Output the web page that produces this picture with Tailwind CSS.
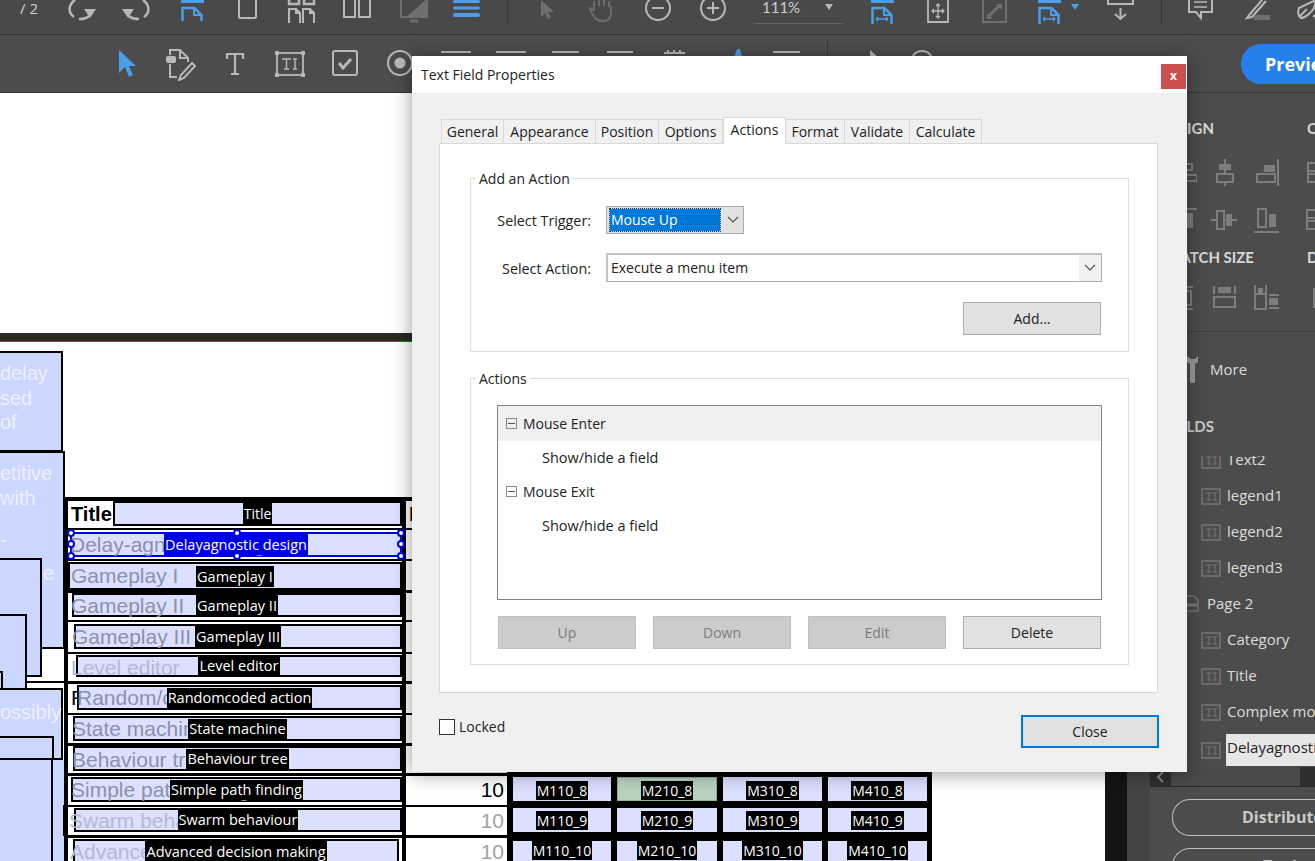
<!DOCTYPE html>
<html lang="en">
<head>
  <meta charset="UTF-8">
  <title>Text Field Properties</title>
  <script src="https://cdn.jsdelivr.net/npm/@tailwindcss/browser@4"></script>
</head>
<body class="bg-white">
<div class="relative w-[1315px] h-[861px] overflow-hidden font-['Open_Sans',sans-serif] text-[14px]">

  <!-- top toolbar -->
  <div class="flex items-start h-[35px] bg-[#494949] border-b border-[#333333] overflow-hidden text-[#b8b8b8] *:shrink-0">
    <span class="ml-[20px] mt-[-3px] w-[23px] text-[15px] text-[#d0d0d0]">/ 2</span>
    <svg class="ml-[25px]" width="28" height="24" fill="none" stroke="#b8b8b8" stroke-width="2.5"><path d="M7 0C0 5 0 13 6 17"/><path d="M11 19c4 0 8-1 10-3"/><path d="M16 9h12l-6 9z" fill="#b8b8b8" stroke="none"/></svg>
    <svg class="ml-[26px]" width="28" height="24" fill="none" stroke="#b8b8b8" stroke-width="2.5"><path d="M21 0C28 5 28 13 22 17"/><path d="M17 19c-4 0-8-1-10-3"/><path d="M12 9H0l6 9z" fill="#b8b8b8" stroke="none"/></svg>
    <svg class="ml-[31px]" width="23" height="24" fill="none" stroke="#4a9eea" stroke-width="2.5"><path d="M0 1h23" stroke-width="4"/><path d="M1.500 21V8h12l7 7v6"/><path d="M13 8v7h8" stroke-width="2"/></svg>
    <svg class="ml-[33px]" width="21" height="24" fill="none" stroke="#b8b8b8" stroke-width="2"><path d="M2 0v17a1 1 0 0 0 1 1h15a1 1 0 0 0 1-1V0"/></svg>
    <svg class="ml-[29px]" width="29" height="24" fill="none" stroke="#b8b8b8" stroke-width="2"><path d="M2 0v4h10V0M17 0v4h10V0" stroke-width="2.500"/><path d="M2 23V9h7l4 4v10M16 23V9h7l4 4v10M9 9v4h4M23 9v4h4"/></svg>
    <svg class="ml-[26px]" width="30" height="24" fill="none" stroke="#b8b8b8" stroke-width="2"><path d="M2 0v17h11V0M17 0v17h11V0"/></svg>
    <svg class="ml-[26px]" width="32" height="24" fill="none" stroke="#6f6f6f" stroke-width="2"><path d="M3 0v17h26V0"/><path d="M29 0v17H10z" fill="#6f6f6f"/><path d="M12 21h8" stroke-width="3"/></svg>
    <svg class="ml-[23px]" width="27" height="24" fill="#4a9eea"><rect y="0" width="27" height="3" rx="1.500"/><rect y="6.500" width="27" height="3" rx="1.500"/><rect y="13" width="27" height="4" rx="2"/></svg>
    <div class="ml-[27px] w-px h-[24px] bg-[#383838]"></div>
    <svg class="ml-[32px]" width="18" height="24" fill="#6f6f6f"><path d="M1 0v17l4-4 3 6 3-1-3-6h6z"/></svg>
    <svg class="ml-[30px]" width="27" height="24" fill="none" stroke="#6f6f6f" stroke-width="1.800"><path d="M6 11V1M11 6V0M16 6V0M21 7V1M6 11L2 8c-1 2 3 7 5 10 2 2 5 3 8 3 6 0 8-4 8-8V6"/></svg>
    <svg class="ml-[30px]" width="26" height="24" fill="none" stroke="#b8b8b8" stroke-width="2"><circle cx="13" cy="8" r="12"/><path d="M7 8h12"/></svg>
    <svg class="ml-[29px]" width="26" height="24" fill="none" stroke="#b8b8b8" stroke-width="2"><circle cx="13" cy="8" r="12"/><path d="M7 8h12M13 2v12"/></svg>
    <div class="ml-[29px] w-[88px] h-[24px] border-b border-[#666666] flex items-start text-[#cfcfcf]">
      <span class="ml-[7px] mt-[-4px] font-['Lato',sans-serif] text-[15px]">111%</span>
      <span class="ml-[25px] mt-[4px] w-0 h-0 border-x-[4px] border-x-transparent border-t-[6px] border-t-[#b8b8b8]"></span>
    </div>
    <svg class="ml-[28px]" width="23" height="24" fill="none" stroke="#4a9eea" stroke-width="2.500"><path d="M0 1h23" stroke-width="4"/><path d="M1.500 24V8h12l7 7v9"/><path d="M13 8v7h8" stroke-width="2"/><path d="M5 19h12M5 19l2-2M5 19l2 2M17 19l-2-2M17 19l-2 2" stroke-width="1.300"/></svg>
    <svg class="ml-[33px]" width="22" height="24" fill="none" stroke="#b8b8b8" stroke-width="1.800"><path d="M1 0v22h20V0"/><path d="M11 4v14M5 11h12M9 6l2-2 2 2M9 16l2 2 2-2M7 9l-2 2 2 2M15 9l2 2-2 2" stroke-width="1.300"/></svg>
    <svg class="ml-[33px]" width="25" height="24" fill="none" stroke="#6f6f6f" stroke-width="2"><path d="M1 0v22h23V0"/><path d="M7 16l10-10" stroke-width="3"/><path d="M14 4h6v6zM5 13v6h6z" fill="#6f6f6f" stroke="none"/></svg>
    <svg class="ml-[31px]" width="23" height="24" fill="none" stroke="#4a9eea" stroke-width="2.500"><path d="M0 1h23" stroke-width="4"/><path d="M1.500 24V8h12l7 7v9"/><path d="M13 8v7h8" stroke-width="2"/><path d="M5 19h12M5 19l2-2M5 19l2 2M17 19l-2-2M17 19l-2 2" stroke-width="1.300"/></svg>
    <span class="ml-[10px] mt-[4px] w-0 h-0 border-x-[4px] border-x-transparent border-t-[6px] border-t-[#4a9eea]"></span>
    <svg class="ml-[28px]" width="27" height="24" fill="none" stroke="#b8b8b8" stroke-width="2"><path d="M1 0v4h25V0"/><path d="M13.500 8v11M8 14l5.500 5 5.500-5"/></svg>
    <div class="ml-[27px] w-px h-[24px] bg-[#383838]"></div>
    <svg class="ml-[26px]" width="25" height="24" fill="none" stroke="#b8b8b8" stroke-width="2"><path d="M1 0v12h7l5 6v-6h11V0"/><path d="M6 2h13M6 7h13" stroke-width="1.500"/></svg>
    <svg class="ml-[28px]" width="29" height="24" fill="none" stroke="#b8b8b8" stroke-width="2"><path d="M21 0L9 14l-3 4 5-1L25 1"/><rect x="13" y="15" width="16" height="5" fill="#6f6f6f" stroke="none"/></svg>
    <svg class="ml-[26px]" width="30" height="24" fill="none" stroke="#b8b8b8" stroke-width="2"><path d="M20 0L3 8c-2 5 0 9 2 10 4 0 10-5 13-10zM3 17l8-8M17 17c2-2 4-2 5 0 2-1 4-1 6 0"/></svg>
  </div>

  <!-- second toolbar -->
  <div class="flex items-start h-[58px] bg-[#4c4c4c] border-b border-[#333333] overflow-hidden *:shrink-0">
    <svg class="ml-[118px] mt-[15px]" width="18" height="27" fill="#4a9eea"><path d="M1 0v23l6-6 4 10 4-2-4-9h7z"/></svg>
    <svg class="ml-[29px] mt-[14px]" width="31" height="32" fill="none" stroke="#b8b8b8" stroke-width="2"><rect x="1" y="7" width="10" height="7" rx="2" fill="#b8b8b8" stroke="none"/><path d="M5 6V1h10l8 8v4M15 1v8h8M5 15v13h7"/><path d="M27 14l3 3-11 12-5 2 2-5z"/></svg>
    <svg class="ml-[29px] mt-[17px]" width="20" height="24" fill="none" stroke="#b8b8b8" stroke-width="2.200"><path d="M2 7V2h16v5M10 2v20M6 22h8"/></svg>
    <svg class="ml-[30px] mt-[16px]" width="30" height="26" fill="none" stroke="#b8b8b8" stroke-width="1.800"><rect x="2" y="2" width="26" height="22"/><path d="M7 8h9M11.500 8v10M9 18h5M20 8v10M18 8h4M18 18h4" stroke-width="1.400"/><circle cx="2" cy="2" r="1.500" fill="#b8b8b8"/><circle cx="28" cy="2" r="1.500" fill="#b8b8b8"/><circle cx="2" cy="24" r="1.500" fill="#b8b8b8"/><circle cx="28" cy="24" r="1.500" fill="#b8b8b8"/></svg>
    <svg class="ml-[27px] mt-[15px]" width="26" height="26" fill="none" stroke="#b8b8b8" stroke-width="2"><rect x="1" y="1" width="24" height="24" rx="2"/><path d="M7 13l4 5 8-9" stroke-width="3"/></svg>
    <svg class="ml-[29px] mt-[15px]" width="26" height="26" fill="none" stroke="#b8b8b8" stroke-width="2"><circle cx="13" cy="13" r="12"/><circle cx="13" cy="13" r="5.500" fill="#b8b8b8" stroke="none"/></svg>
    <!-- tools that just show over the dialog -->
    <div class="ml-[28px] mt-[16px] w-[30px] h-[8px] border-t-2 border-[#b8b8b8]"></div>
    <div class="ml-[25px] mt-[16px] w-[30px] h-[8px] border-t-2 border-[#b8b8b8]"></div>
    <div class="ml-[26px] mt-[16px] w-[27px] h-[8px] border-t-2 border-[#b8b8b8]"></div>
    <div class="ml-[28px] mt-[16px] w-[26px] h-[8px] border-t-2 border-[#b8b8b8]"></div>
    <svg class="ml-[30px] mt-[15px]" width="23" height="8" fill="none" stroke="#b8b8b8" stroke-width="2"><path d="M1 3h21"/><path d="M5 0v4M11 0v4M17 0v4"/></svg>
    <svg class="ml-[48px] mt-[14px]" width="8" height="8" fill="#4a9eea"><path d="M3 0h3l2 8H0z"/></svg>
    <div class="ml-[31px] mt-[16px] w-[27px] h-[8px] border-t-2 border-[#b8b8b8]"></div>
    <div class="ml-[27px] mt-[5px] w-px h-[18px] bg-[#383838]"></div>
    <svg class="ml-[41px] mt-[15px]" width="10" height="8" fill="#b8b8b8"><path d="M1 0l9 8H1z"/></svg>
    <svg class="ml-[32px] mt-[15px]" width="22" height="8" fill="none" stroke="#b8b8b8" stroke-width="2"><path d="M1 8C3 2 7 1 11 1s8 1 10 7"/></svg>
    <div class="ml-[308px] mt-[9px] flex items-center w-[100px] h-[40px] rounded-l-[20px] bg-[#2680eb] pl-[24px] text-white font-bold text-[18px]">Preview</div>
  </div>

  <!-- main area -->
  <div class="flex h-[768px]">
    <div class="flex flex-col w-[1105px] shrink-0 bg-white">
      <div class="h-[240px] shrink-0"></div>
      <div class="h-[9px] shrink-0 bg-[#2a2a2a] border-b border-[#0d8a0d]"></div>

      <!-- form page -->
      <div class="relative flex-1 overflow-hidden font-['Liberation_Sans',Arial,sans-serif] text-[20px] text-[#eef1ff]">
        <div class="absolute left-0 top-[9px] w-[63px] h-[101px] bg-[#ccd7ff] border-2 border-l-0 border-black pt-[8px] leading-[24.500px]">
          <div>delay</div><div>sed</div><div>of</div>
        </div>
        <div class="absolute left-0 top-[109px] w-[65px] h-[198px] bg-[#ccd7ff] border-2 border-l-0 border-black pt-[8px] leading-[24.500px]">
          <div>etitive</div><div>with</div>
          <div class="mt-[18px]">-</div>
          <div class="mt-[8px] pl-[43px]">e</div>
        </div>
        <div class="absolute left-0 top-[216px] w-[42px] h-[119px] bg-[#ccd7ff] border-2 border-l-0 border-black"></div>
        <div class="absolute left-0 top-[272px] w-[27px] h-[76px] bg-[#ccd7ff] border-2 border-l-0 border-black"></div>
        <div class="absolute left-0 top-[329px] w-[3px] h-[19px] bg-[#ccd7ff] border-2 border-l-0 border-black"></div>
        <div class="absolute left-[27px] top-[339px] w-[37px] h-[2px] bg-black"></div>
        <div class="absolute left-0 top-[346px] w-[63px] h-[72px] bg-[#ccd7ff] border-2 border-l-0 border-black pt-[7px]">ossibly</div>
        <div class="absolute left-0 top-[394px] w-[54px] h-[24px] bg-[#ccd7ff] border-2 border-l-0 border-black"></div>
        <div class="absolute left-[51px] top-[418px] w-[16px] h-[110px] bg-[#ccd7ff] border-l-2 border-black"></div>
        <div class="absolute left-0 top-[416px] w-[53px] h-[110px] bg-[#ccd7ff] border-2 border-l-0 border-black"></div>
        <div class="absolute left-[63px] top-[463px] w-[5px] h-[31px] border border-black"></div>

        <!-- the table of the form -->
        <div class="absolute left-[64px] top-[155px] w-[868px] h-[370px] bg-black pl-[4px] pt-[4px] text-[21px] text-[#8b90ad]">

          <div class="flex gap-[4px] h-[27px] mb-[2px]">
            <div class="flex w-[334px] bg-white">
              <span class="w-[45px] pl-[3px] shrink-0 overflow-hidden font-bold text-[20px] text-black leading-[26px]">Title</span>
              <div class="relative flex-1 h-[25px] border-2 border-black bg-[#dbe0ff] flex justify-center font-['Open_Sans',sans-serif] text-[14px] text-white"><span class="bg-black px-[1px] h-[21px] leading-[21px]">Title</span></div>
            </div>
            <div class="w-[101px] bg-white overflow-hidden pl-[3px] text-black font-bold leading-[26px]">I</div>
          </div>

          <div class="flex gap-[4px] h-[29px] mb-[2px]">
            <div class="w-[334px] bg-white pt-[2px] pl-[2px]">
              <div class="relative h-[25px] border-2 border-[#0000e6] bg-[#dbe0ff] flex justify-center overflow-visible">
                <span class="absolute -left-[2px] -top-[2px] leading-[26px] whitespace-nowrap">Delay-agnostic design</span>
                <span class="relative bg-[#0000e6] text-white px-[1px] h-[21px] leading-[21px] font-['Open_Sans',sans-serif] text-[14.500px]">Delayagnostic design</span>
                <span class="absolute -left-[5px] -top-[5px] w-[8px] h-[8px] rounded-full bg-white border-2 border-[#0000e6]"></span>
                <span class="absolute left-[161px] -top-[5px] w-[8px] h-[8px] rounded-full bg-white border-2 border-[#0000e6]"></span>
                <span class="absolute -right-[5px] -top-[5px] w-[8px] h-[8px] rounded-full bg-white border-2 border-[#0000e6]"></span>
                <span class="absolute -left-[5px] top-[6px] w-[8px] h-[8px] rounded-full bg-white border-2 border-[#0000e6]"></span>
                <span class="absolute -right-[5px] top-[6px] w-[8px] h-[8px] rounded-full bg-white border-2 border-[#0000e6]"></span>
                <span class="absolute -left-[5px] -bottom-[5px] w-[8px] h-[8px] rounded-full bg-white border-2 border-[#0000e6]"></span>
                <span class="absolute left-[161px] -bottom-[5px] w-[8px] h-[8px] rounded-full bg-white border-2 border-[#0000e6]"></span>
                <span class="absolute -right-[5px] -bottom-[5px] w-[8px] h-[8px] rounded-full bg-white border-2 border-[#0000e6]"></span>
              </div>
            </div>
            <div class="w-[101px] bg-white"></div>
          </div>

          <div class="flex gap-[4px] h-[29px] mb-[3px]">
            <div class="w-[334px] bg-white pt-[1px]">
              <div class="relative h-[28px] border-2 border-black bg-[#dbe0ff] flex justify-center items-center">
                <span class="absolute left-[1px] -top-[1px] leading-[26px] whitespace-nowrap">Gameplay I</span>
                <span class="relative bg-black text-white px-[1px] h-[21px] leading-[21px] font-['Open_Sans',sans-serif] text-[14.500px]">Gameplay I</span>
              </div>
            </div>
            <div class="w-[101px] bg-white"></div>
          </div>

          <div class="flex gap-[4px] h-[27px] mb-[2px]">
            <div class="w-[334px] bg-white pl-[4px]">
              <div class="relative h-[24px] border-2 border-black bg-[#dbe0ff] flex justify-center items-center">
                <span class="absolute -left-[3px] -top-[2px] leading-[26px] whitespace-nowrap">Gameplay II</span>
                <span class="relative bg-black text-white px-[1px] h-[21px] leading-[21px] font-['Open_Sans',sans-serif] text-[14.500px]">Gameplay II</span>
              </div>
            </div>
            <div class="w-[101px] bg-white"></div>
          </div>

          <div class="flex gap-[4px] h-[30px] mb-[2px]">
            <div class="w-[334px] bg-white pt-[2px] pl-[6px]">
              <div class="relative h-[25px] border-2 border-black bg-[#dbe0ff] flex justify-center items-center">
                <span class="absolute -left-[4px] -top-[2px] leading-[26px] whitespace-nowrap">Gameplay III</span>
                <span class="relative bg-black text-white px-[1px] h-[21px] leading-[21px] font-['Open_Sans',sans-serif] text-[14.500px]">Gameplay III</span>
              </div>
            </div>
            <div class="w-[101px] bg-white"></div>
          </div>

          <div class="flex gap-[4px] h-[27px] mb-[3px]">
            <div class="w-[334px] bg-white pt-[1px] pl-[8px]">
              <div class="relative h-[22px] border-2 border-black bg-[#dbe0ff] flex justify-center items-center">
                <span class="absolute -left-[7px] -top-[2px] leading-[26px] whitespace-nowrap text-[#b4b9d2]">Level editor</span>
                <span class="relative bottom-[1px] bg-black text-white px-[1px] h-[19px] leading-[19px] font-['Open_Sans',sans-serif] text-[14.500px]">Level editor</span>
              </div>
            </div>
            <div class="w-[101px] bg-white"></div>
          </div>

          <div class="flex gap-[4px] h-[29px] mb-[2px]">
            <div class="relative w-[334px] bg-white pt-[1px] pl-[9px]">
              <span class="absolute left-[3px] top-[1px] leading-[26px] text-black">R</span>
              <div class="relative h-[25px] border-2 border-black bg-[#dbe0ff] flex justify-center items-center">
                <span class="absolute -left-[2px] -top-[2px] leading-[26px] whitespace-nowrap">Random/coded action</span>
                <span class="relative bg-black text-white px-[1px] h-[20px] leading-[20px] font-['Open_Sans',sans-serif] text-[14.500px]">Randomcoded action</span>
              </div>
            </div>
            <div class="w-[101px] bg-white"></div>
          </div>

          <div class="flex gap-[4px] h-[28px] mb-[3px]">
            <div class="w-[334px] bg-white pt-[1px] pl-[5px]">
              <div class="relative h-[25px] border-2 border-black bg-[#dbe0ff] flex justify-center items-center">
                <span class="absolute -left-[3px] -top-[2px] leading-[26px] whitespace-nowrap">State machine</span>
                <span class="relative bg-black text-white px-[1px] h-[20px] leading-[20px] font-['Open_Sans',sans-serif] text-[14.500px]">State machine</span>
              </div>
            </div>
            <div class="w-[101px] bg-white"></div>
          </div>

          <div class="flex gap-[4px] h-[27px] mb-[3px]">
            <div class="w-[334px] bg-white pl-[5px]">
              <div class="relative h-[25px] border-2 border-black bg-[#dbe0ff] flex justify-center items-center">
                <span class="absolute -left-[3px] -top-[1px] leading-[26px] whitespace-nowrap">Behaviour tree</span>
                <span class="relative bg-black text-white px-[1px] h-[20px] leading-[20px] font-['Open_Sans',sans-serif] text-[14.500px]">Behaviour tree</span>
              </div>
            </div>
            <div class="w-[101px] bg-white"></div>
          </div>

          <div class="flex gap-[4px] h-[29px] mb-[2px]">
            <div class="w-[334px] bg-white pt-[1px] pl-[3px]">
              <div class="relative h-[25px] border-2 border-black bg-[#dbe0ff] flex justify-center items-center">
                <span class="absolute -left-[2px] -top-[2px] leading-[26px] whitespace-nowrap">Simple path finding</span>
                <span class="relative bg-black text-white px-[1px] h-[20px] leading-[20px] font-['Open_Sans',sans-serif] text-[14.500px]">Simple path finding</span>
              </div>
            </div>
            <div class="w-[101px] bg-white text-right pr-[3px] text-black leading-[28px]">10</div>
            <div class="flex gap-[6px] ml-[2px] pt-[1px] font-['Open_Sans',sans-serif] text-[14px] text-white">
              <div class="relative w-[98px] h-[24px] bg-[#dbe0ff] flex justify-center items-end pb-[1px]"><span class="bg-black px-[1px] h-[19px] leading-[19px]">M110_8</span></div>
              <div class="relative w-[100px] h-[24px] bg-[#b9d3bf] border border-[#8fb38f] flex justify-center items-end"><span class="bg-black px-[1px] h-[19px] leading-[19px]">M210_8</span></div>
              <div class="relative w-[99px] h-[24px] bg-[#dbe0ff] flex justify-center items-end pb-[1px]"><span class="bg-black px-[1px] h-[19px] leading-[19px]">M310_8</span></div>
              <div class="relative w-[99px] h-[24px] bg-[#dbe0ff] flex justify-center items-end pb-[1px]"><span class="bg-black px-[1px] h-[19px] leading-[19px]">M410_8</span></div>
            </div>
          </div>

          <div class="flex gap-[4px] h-[28px] mb-[3px]">
            <div class="w-[334px] bg-white pt-[1px] pl-[6px]">
              <div class="relative h-[24px] border-2 border-black bg-[#dbe0ff] flex justify-center items-center">
                <span class="absolute -left-[7px] -top-[2px] leading-[26px] whitespace-nowrap text-[#b4b9d2]">Swarm behaviour</span>
                <span class="relative bg-black text-white px-[1px] h-[20px] leading-[20px] font-['Open_Sans',sans-serif] text-[14.500px]">Swarm behaviour</span>
              </div>
            </div>
            <div class="w-[101px] bg-white text-right pr-[3px] text-[#a3a3a3] leading-[28px]">10</div>
            <div class="flex gap-[6px] ml-[2px] pt-[1px] font-['Open_Sans',sans-serif] text-[14px] text-white">
              <div class="w-[98px] h-[24px] bg-[#dbe0ff] flex justify-center items-center"><span class="bg-black px-[1px] h-[19px] leading-[19px]">M110_9</span></div>
              <div class="w-[100px] h-[24px] bg-[#dbe0ff] flex justify-center items-center"><span class="bg-black px-[1px] h-[19px] leading-[19px]">M210_9</span></div>
              <div class="w-[99px] h-[24px] bg-[#dbe0ff] flex justify-center items-center"><span class="bg-black px-[1px] h-[19px] leading-[19px]">M310_9</span></div>
              <div class="w-[99px] h-[24px] bg-[#dbe0ff] flex justify-center items-center"><span class="bg-black px-[1px] h-[19px] leading-[19px]">M410_9</span></div>
            </div>
          </div>

          <div class="flex gap-[4px] h-[30px]">
            <div class="w-[334px] bg-white pt-[1px] pl-[5px] pr-[3px]">
              <div class="relative h-[30px] border-2 border-black bg-[#dbe0ff] flex justify-center">
                <span class="absolute -left-[5px] -top-[2px] leading-[26px] whitespace-nowrap text-[#b4b9d2]">Advanced decision making</span>
                <span class="relative bg-black text-white px-[1px] h-[21px] leading-[21px] font-['Open_Sans',sans-serif] text-[14.500px]">Advanced decision making</span>
              </div>
            </div>
            <div class="w-[101px] bg-white text-right pr-[3px] text-[#a3a3a3] leading-[28px]">10</div>
            <div class="flex gap-[6px] ml-[2px] pt-[3px] font-['Open_Sans',sans-serif] text-[14px] text-white">
              <div class="w-[98px] h-[24px] bg-[#dbe0ff] flex justify-center"><span class="bg-black px-[1px] h-[19px] leading-[19px]">M110_10</span></div>
              <div class="w-[100px] h-[24px] bg-[#dbe0ff] flex justify-center"><span class="bg-black px-[1px] h-[19px] leading-[19px]">M210_10</span></div>
              <div class="w-[99px] h-[24px] bg-[#dbe0ff] flex justify-center"><span class="bg-black px-[1px] h-[19px] leading-[19px]">M310_10</span></div>
              <div class="w-[99px] h-[24px] bg-[#dbe0ff] flex justify-center"><span class="bg-black px-[1px] h-[19px] leading-[19px]">M410_10</span></div>
            </div>
          </div>
        </div>
      </div>
    </div>

    <div class="w-[22px] shrink-0 bg-[#141414]"></div>
    <div class="w-[23px] shrink-0 bg-[#454545]"></div>

    <!-- right panel -->
    <div class="w-[165px] shrink-0 overflow-hidden bg-[#4c4c4c] text-[#d8d8d8]">
      <div class="w-[320px] h-[239px] border-b border-[#3c3c3c]">
        <div class="flex pt-[25px] font-['Lato',sans-serif] text-[15px] font-bold text-[#d8d8d8] leading-[20px]"><span class="w-[64px] text-right">ALIGN</span><span class="ml-[93px]">CENTER</span></div>
        <div class="flex items-start mt-[21px] ml-[37px] h-[27px] *:shrink-0">
          <svg width="10" height="27" fill="none" stroke="#7d7d7d" stroke-width="2"><path d="M0 5h5v6H0M0 16h10v6H0" /></svg>
          <svg class="ml-[19px]" width="18" height="27" fill="none" stroke="#7d7d7d" stroke-width="2"><path d="M9 0v27"/><rect x="3" y="5" width="12" height="6" fill="#7d7d7d" stroke="none"/><rect x="1" y="15" width="16" height="8" fill="#4c4c4c"/></svg>
          <svg class="ml-[22px]" width="23" height="27" fill="none" stroke="#7d7d7d" stroke-width="2"><path d="M22 0v27"/><rect x="8" y="6" width="11" height="7" fill="#7d7d7d" stroke="none"/><rect x="1" y="15" width="18" height="8"/></svg>
          <svg class="ml-[28px]" width="14" height="27" fill="none" stroke="#7d7d7d" stroke-width="2"><path d="M1 3v21M1 4h13v8H1M1 15h13v8H1"/></svg>
        </div>
        <div class="flex items-start mt-[20px] ml-[37px] h-[27px] *:shrink-0">
          <svg width="10" height="27" fill="none" stroke="#7d7d7d" stroke-width="2"><path d="M0 3h10"/><rect x="0" y="7" width="6" height="15" fill="#7d7d7d" stroke="none"/></svg>
          <svg class="ml-[14px]" width="26" height="27" fill="none" stroke="#7d7d7d" stroke-width="2"><path d="M0 14h26"/><rect x="6" y="5" width="7" height="18" fill="#4c4c4c"/><rect x="15" y="8" width="6" height="12" fill="#7d7d7d" stroke="none"/></svg>
          <svg class="ml-[17px]" width="25" height="27" fill="none" stroke="#7d7d7d" stroke-width="2"><path d="M0 26h25"/><rect x="4" y="3" width="8" height="18"/><rect x="15" y="8" width="7" height="13" fill="#7d7d7d" stroke="none"/></svg>
          <svg class="ml-[27px]" width="14" height="27" fill="none" stroke="#7d7d7d" stroke-width="2"><path d="M1 3v21M1 4h13v8H1M1 15h13v8H1"/></svg>
        </div>
        <div class="flex pt-[14px] font-['Lato',sans-serif] text-[15px] font-bold leading-[20px]"><span class="w-[104px] text-right whitespace-nowrap">MATCH SIZE</span><span class="ml-[53px]">DISTRIBUTE</span></div>
        <div class="flex items-start mt-[18px] ml-[35px] h-[26px] *:shrink-0">
          <svg width="8" height="26" fill="none" stroke="#7d7d7d" stroke-width="2"><path d="M0 2h8M0 24h8M0 6h6v14H0"/></svg>
          <svg class="ml-[20px]" width="23" height="26" fill="none" stroke="#7d7d7d" stroke-width="2"><path d="M1 1v8M22 1v8"/><rect x="5" y="2" width="13" height="6" fill="#7d7d7d" stroke="none"/><rect x="1" y="12" width="21" height="10"/></svg>
          <svg class="ml-[18px]" width="25" height="26" fill="none" stroke="#7d7d7d" stroke-width="2"><rect x="1" y="9" width="11" height="15"/><path d="M1 0v8M12 0v8"/><rect x="4" y="3" width="5" height="5" fill="#7d7d7d" stroke="none"/><path d="M15 10h10M15 23h10"/><rect x="15" y="13" width="9" height="7" fill="#7d7d7d" stroke="none"/></svg>
          <svg class="ml-[33px]" width="10" height="26" fill="none" stroke="#7d7d7d" stroke-width="2"><path d="M10 4H2v18h8"/></svg>
        </div>
      </div>
      <div class="flex items-center h-[37px] mt-[19px] w-[200px]">
        <svg class="ml-[36px]" width="12" height="27" fill="#9a9a9a"><path d="M1 0v6l3 2v17a2 2 0 0 0 5 0V8l3-2V0L9 3H5z" /></svg>
        <span class="ml-[12px] text-[15px] text-[#dcdcdc]">More</span>
      </div>
      <div class="w-[64px] h-[20px] mt-[28px] text-right font-['Lato',sans-serif] text-[15px] font-bold leading-[20px] text-[#c8c8c8]">FIELDS</div>
      <div class="h-[311px] w-[300px] mt-[20px] overflow-hidden text-[15px] text-[#dcdcdc]">
        <div class="flex items-center h-[36px] -mt-[15px] pl-[51px]"><svg class="mt-[3px] shrink-0" width="20" height="19" fill="none" stroke="#767676" stroke-width="1.500"><rect x="1" y="2" width="18" height="15"/><path d="M5 6h6M8 6v7M6 13h4M14 6v7M12 6h4M12 13h4" stroke-width="1"/></svg><span class="ml-[6px]">Text2</span></div>
        <div class="flex items-center h-[36px] pl-[51px]"><svg class="mt-[3px] shrink-0" width="20" height="19" fill="none" stroke="#767676" stroke-width="1.500"><rect x="1" y="2" width="18" height="15"/><path d="M5 6h6M8 6v7M6 13h4M14 6v7M12 6h4M12 13h4" stroke-width="1"/></svg><span class="ml-[6px]">legend1</span></div>
        <div class="flex items-center h-[36px] pl-[51px]"><svg class="mt-[3px] shrink-0" width="20" height="19" fill="none" stroke="#767676" stroke-width="1.500"><rect x="1" y="2" width="18" height="15"/><path d="M5 6h6M8 6v7M6 13h4M14 6v7M12 6h4M12 13h4" stroke-width="1"/></svg><span class="ml-[6px]">legend2</span></div>
        <div class="flex items-center h-[36px] pl-[51px]"><svg class="mt-[3px] shrink-0" width="20" height="19" fill="none" stroke="#767676" stroke-width="1.500"><rect x="1" y="2" width="18" height="15"/><path d="M5 6h6M8 6v7M6 13h4M14 6v7M12 6h4M12 13h4" stroke-width="1"/></svg><span class="ml-[6px]">legend3</span></div>
        <div class="flex items-center h-[36px] pl-[35px]"><svg class="shrink-0" width="14" height="19" fill="none" stroke="#767676" stroke-width="1.500"><path d="M1 17V2h8l4 4v11z"/><path d="M2 11h10" stroke-width="3"/></svg><span class="ml-[8px]">Page 2</span></div>
        <div class="flex items-center h-[36px] pl-[51px]"><svg class="mt-[3px] shrink-0" width="20" height="19" fill="none" stroke="#767676" stroke-width="1.500"><rect x="1" y="2" width="18" height="15"/><path d="M5 6h6M8 6v7M6 13h4M14 6v7M12 6h4M12 13h4" stroke-width="1"/></svg><span class="ml-[6px]">Category</span></div>
        <div class="flex items-center h-[36px] pl-[51px]"><svg class="mt-[3px] shrink-0" width="20" height="19" fill="none" stroke="#767676" stroke-width="1.500"><rect x="1" y="2" width="18" height="15"/><path d="M5 6h6M8 6v7M6 13h4M14 6v7M12 6h4M12 13h4" stroke-width="1"/></svg><span class="ml-[6px]">Title</span></div>
        <div class="flex items-center h-[36px] pl-[51px]"><svg class="mt-[3px] shrink-0" width="20" height="19" fill="none" stroke="#767676" stroke-width="1.500"><rect x="1" y="2" width="18" height="15"/><path d="M5 6h6M8 6v7M6 13h4M14 6v7M12 6h4M12 13h4" stroke-width="1"/></svg><span class="ml-[6px]">Complex movement</span></div>
        <div class="flex items-start h-[36px] pl-[51px]"><svg class="mt-[12px] shrink-0" width="20" height="19" fill="none" stroke="#767676" stroke-width="1.500"><rect x="1" y="2" width="18" height="15"/><path d="M5 6h6M8 6v7M6 13h4M14 6v7M12 6h4M12 13h4" stroke-width="1"/></svg><span class="ml-[5px] mt-[5px] pl-[1px] h-[32px] leading-[26px] whitespace-nowrap bg-[#e6e6e6] text-[#222222]">Delayagnostic design</span></div>
      </div>
      <div class="flex h-[20px] w-[300px] bg-[#2f2f2f] border-b border-[#2a2a2a]">
        <div class="w-[21px] flex items-center justify-center"><svg width="9" height="12" fill="none" stroke="#8a8a8a" stroke-width="2"><path d="M7 1L2 6l5 5"/></svg></div>
        <div class="w-[129px] bg-[#4a4a4a]"></div>
      </div>
      <div class="w-[300px] pl-[22px] pt-[12px]">
        <div class="w-[200px] h-[37px] rounded-l-[18px] border border-[#bdbdbd] border-r-0 pl-[69px] font-bold text-[16px] leading-[35px] text-[#c8c8c8]">Distribute</div>
        <div class="w-[200px] h-[37px] mt-[12px] rounded-l-[18px] border border-[#bdbdbd] border-r-0 pl-[90px] font-bold text-[16px] leading-[35px] text-[#c8c8c8]">Tools</div>
      </div>
    </div>
  </div>

  <!-- Text Field Properties dialog -->
  <div class="absolute left-[412px] top-[56px] w-[775px] h-[716px] flex flex-col bg-[#f0f0f0] text-[#222222] shadow-[0_2px_18px_rgba(0,0,0,0.4)] font-['Open_Sans',sans-serif] text-[14px]">
    <div class="flex items-start justify-between h-[37px] shrink-0 bg-white pl-[9px] pr-[1px]">
      <span class="mt-[8px] text-[14px]">Text Field Properties</span>
      <span class="mt-[8px] w-[25px] h-[25px] bg-[#c9504f] text-white text-[12px] font-bold leading-[24px] text-center">x</span>
    </div>
    <div class="pl-[27px] pt-[24px]">
      <div class="relative z-10 flex items-end h-[27px] ml-[2px] text-[14px] -mb-px">
        <div class="w-[63px] h-[25px] border border-[#d9d9d9] leading-[24px] text-center">General</div>
        <div class="w-[92px] h-[25px] border border-l-0 border-[#d9d9d9] leading-[24px] text-center">Appearance</div>
        <div class="w-[63px] h-[25px] border border-l-0 border-[#d9d9d9] leading-[24px] text-center">Position</div>
        <div class="w-[64px] h-[25px] border border-l-0 border-[#d9d9d9] leading-[24px] text-center">Options</div>
        <div class="w-[63px] h-[27px] border border-b-0 border-[#d9d9d9] bg-white leading-[24px] text-center">Actions</div>
        <div class="w-[59px] h-[25px] border border-l-0 border-[#d9d9d9] leading-[24px] text-center">Format</div>
        <div class="w-[65px] h-[25px] border border-l-0 border-[#d9d9d9] leading-[24px] text-center">Validate</div>
        <div class="w-[72px] h-[25px] border border-l-0 border-[#d9d9d9] leading-[24px] text-center">Calculate</div>
      </div>
      <div class="w-[719px] h-[550px] bg-white border border-[#d9d9d9] pl-[30px] pt-[34px]">

        <div class="relative w-[659px] h-[174px] border border-[#dcdcdc] pt-[27px]">
          <span class="absolute left-[5px] -top-[10px] bg-white px-[3px] leading-[19px]">Add an Action</span>
          <div class="flex items-center">
            <span class="w-[120px] text-right mt-[2px] text-[14.300px]">Select Trigger:</span>
            <div class="ml-[15px] flex items-center w-[138px] h-[28px] bg-[#e1e1e1] border border-[#adadad] pl-[3px]">
              <span class="w-[110px] h-[22px] bg-[#0078d7] text-white pl-[1px] leading-[21px] outline-1 outline-dotted outline-[#0a3a66]">Mouse Up</span>
              <svg class="ml-[7px]" width="12" height="8" fill="none" stroke="#555555" stroke-width="1.200"><path d="M1 1l5 5 5-5"/></svg>
            </div>
          </div>
          <div class="flex items-center mt-[19px]">
            <span class="w-[120px] text-right mt-[2px] text-[14.300px]">Select Action:</span>
            <div class="ml-[15px] flex items-center w-[496px] h-[29px] bg-white border border-[#adadad] border-t-2 border-l-2 border-t-[#c4c4c4] border-l-[#c4c4c4] pl-[3px]">
              <span class="flex-1 -mt-[2px]">Execute a menu item</span>
              <span class="flex items-center justify-center w-[22px] h-full bg-[#f0f0f0]"><svg width="12" height="8" fill="none" stroke="#555555" stroke-width="1.200"><path d="M1 1l5 5 5-5"/></svg></span>
            </div>
          </div>
          <div class="flex justify-end pr-[27px] mt-[20px]">
            <div class="w-[138px] h-[33px] bg-[#e1e1e1] border border-[#adadad] text-center leading-[31px]">Add...</div>
          </div>
        </div>

        <div class="relative w-[659px] h-[287px] mt-[26px] border border-[#dcdcdc] pt-[26px] pl-[26px]">
          <span class="absolute left-[5px] -top-[10px] bg-white px-[3px] leading-[19px]">Actions</span>
          <div class="w-[605px] h-[195px] border border-[#828282] bg-white">
            <div class="flex items-center h-[35px] bg-[#f0f0f0] pl-[8px]">
              <span class="flex items-center justify-center w-[11px] h-[11px] border border-[#8a8a8a]"><span class="w-[7px] h-px bg-[#555555]"></span></span>
              <span class="ml-[6px]">Mouse Enter</span>
            </div>
            <div class="h-[34px] pl-[44px] leading-[34px] text-[14.500px]">Show/hide a field</div>
            <div class="flex items-center h-[33px] pl-[8px]">
              <span class="flex items-center justify-center w-[11px] h-[11px] border border-[#8a8a8a]"><span class="w-[7px] h-px bg-[#555555]"></span></span>
              <span class="ml-[6px]">Mouse Exit</span>
            </div>
            <div class="h-[35px] pl-[44px] leading-[35px] text-[14.500px]">Show/hide a field</div>
          </div>
          <div class="flex gap-[17px] mt-[16px] ml-[1px]">
            <div class="w-[138px] h-[33px] bg-[#cccccc] border border-[#bfbfbf] text-[#7a7a7a] text-center leading-[31px]">Up</div>
            <div class="w-[138px] h-[33px] bg-[#cccccc] border border-[#bfbfbf] text-[#7a7a7a] text-center leading-[31px]">Down</div>
            <div class="w-[138px] h-[33px] bg-[#cccccc] border border-[#bfbfbf] text-[#7a7a7a] text-center leading-[31px]">Edit</div>
            <div class="w-[138px] h-[33px] bg-[#e1e1e1] border border-[#adadad] text-center leading-[31px]">Delete</div>
          </div>
        </div>
      </div>
      <div class="flex items-start justify-between w-[720px] mt-[22px]">
        <div class="flex items-center mt-[1px]">
          <span class="w-[16px] h-[16px] bg-white border border-[#333333]"></span>
          <span class="ml-[4px]">Locked</span>
        </div>
        <div class="w-[138px] h-[33px] bg-[#e1e1e1] border-2 border-[#0078d7] text-center leading-[30px]">Close</div>
      </div>
    </div>
  </div>
</div>
</body>
</html>
